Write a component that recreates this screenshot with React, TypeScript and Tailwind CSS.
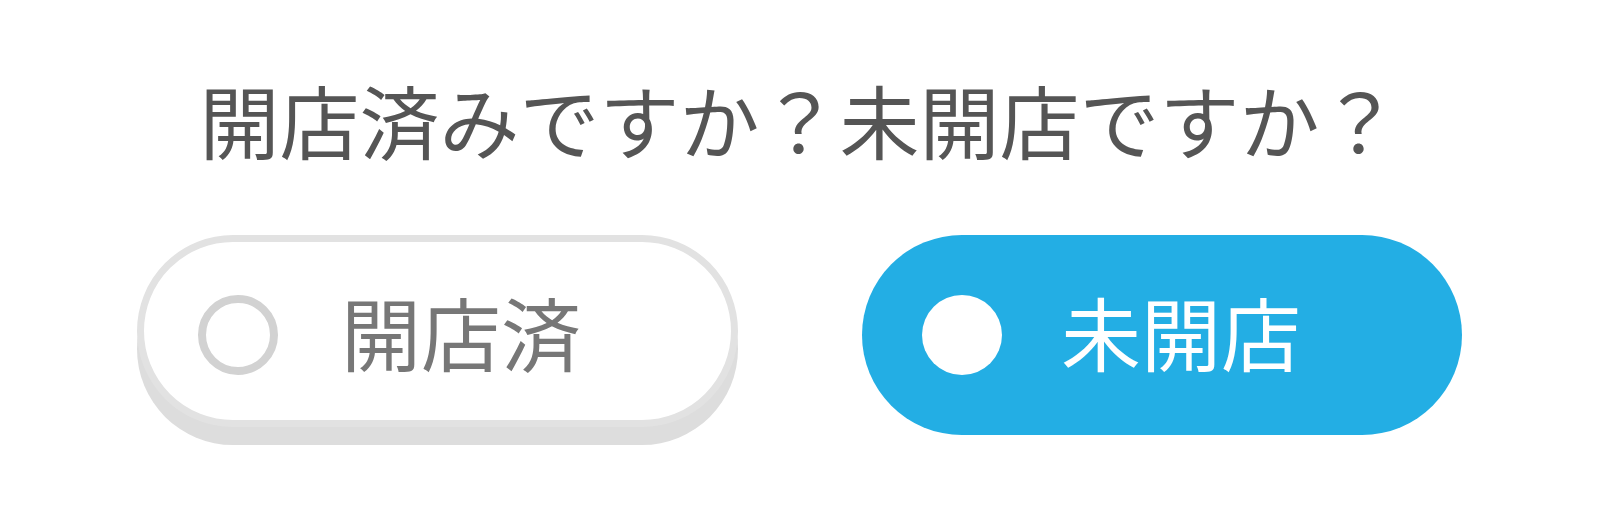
import { useState } from 'react'

type Choice = 'opened' | 'unopened'

const options: { id: Choice; label: string }[] = [
  { id: 'opened', label: '開店済' },
  { id: 'unopened', label: '未開店' },
]

export default function App() {
  const [choice, setChoice] = useState<Choice>('unopened')

  return (
    <div
      className="w-full h-[531px] bg-white pt-[78px] pl-[137px]"
      style={{ fontFamily: '"Noto Sans CJK JP", "Noto Sans", sans-serif' }}
    >
      <div className="w-[1325px] flex flex-col">
        {/* 質問 */}
        <h1 className="text-center text-[80px] leading-none font-normal text-[#555555]">
          開店済みですか？未開店ですか？
        </h1>

        {/* 選択ボタン */}
        <div className="mt-[77px] flex items-start gap-[124px]">
          {options.map((opt) => {
            const active = choice === opt.id
            if (active) {
              return (
                <button
                  key={opt.id}
                  onClick={() => setChoice(opt.id)}
                  className="w-[600px] h-[200px] rounded-full bg-[#23aee4] flex items-center pl-[60px]"
                >
                  <span className="w-[80px] h-[80px] rounded-full bg-white shrink-0" />
                  <span className="ml-[59px] mb-[11px] text-[80px] leading-none text-white">
                    {opt.label}
                  </span>
                </button>
              )
            }
            return (
              <button
                key={opt.id}
                onClick={() => setChoice(opt.id)}
                className="w-[601px] h-[192px] rounded-full bg-white border-[7px] border-[#e2e2e2] shadow-[0_18px_0_#dddddd] flex items-center pl-[54px] pt-2"
              >
                <span className="w-[80px] h-[80px] rounded-full border-[8px] border-[#d2d2d2] shrink-0" />
                <span className="ml-[63px] mb-[11px] text-[80px] leading-none text-[#777777]">
                  {opt.label}
                </span>
              </button>
            )
          })}
        </div>
      </div>
    </div>
  )
}
